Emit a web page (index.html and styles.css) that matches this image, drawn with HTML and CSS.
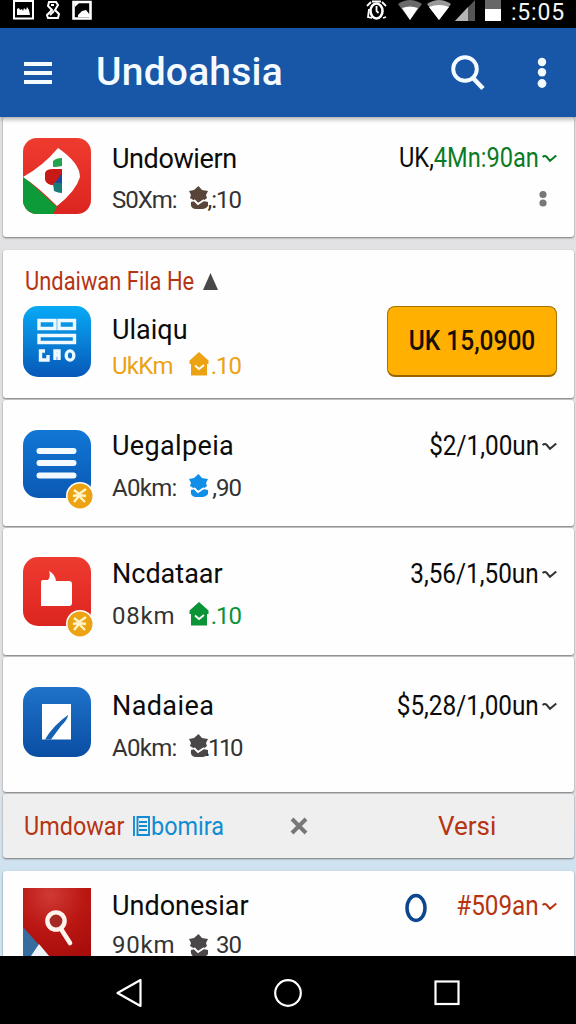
FILE: index.html
```html
<!DOCTYPE html>
<html lang="id">
<head>
<meta charset="utf-8">
<title>Undoahsia</title>
<link rel="stylesheet" href="styles.css">
</head>
<body>
<svg width="0" height="0" class="defs">
  <defs>
    <linearGradient id="sky" x1="0" y1="0" x2="0" y2="1"><stop offset="0" stop-color="#08aaf6"/><stop offset="1" stop-color="#0758b8"/></linearGradient>
    <linearGradient id="blue" x1="0" y1="0" x2="0" y2="1"><stop offset="0" stop-color="#1177d6"/><stop offset="1" stop-color="#0a59b4"/></linearGradient>
    <linearGradient id="navy" x1="0" y1="0" x2="0" y2="1"><stop offset="0" stop-color="#1e72ca"/><stop offset="1" stop-color="#0a4ea3"/></linearGradient>
    <linearGradient id="red" x1="0" y1="0" x2="0" y2="1"><stop offset="0" stop-color="#ee3b2f"/><stop offset="1" stop-color="#dc2520"/></linearGradient>
    <radialGradient id="crimson" cx=".4" cy=".1" r="1"><stop offset="0" stop-color="#cf3a35"/><stop offset=".5" stop-color="#bb1713"/><stop offset="1" stop-color="#a60d0b"/></radialGradient>
    <symbol id="chev" viewBox="0 0 15 9"><path d="M.6 3Q2.800.8 4.800 3L8 6.800 14.300 1.600" fill="none" stroke="currentColor" stroke-width="2"/></symbol>
    <symbol id="house" viewBox="0 0 20 24"><path d="M10 0 .5 8.500V12H2v11.500h16V12h1.500V8.500z" fill="currentColor"/><path d="M6 13.500l4 3.500 5-4" fill="none" stroke="#fff" stroke-width="1.800"/></symbol>
    <symbol id="bloom" viewBox="0 0 20 24"><path d="M9.500 0L13 4l6 1-2 4 1 3-4 3 5 1v4q-2 3-5 3H6q-5-1-4-7l4-1-5-3 1-3-2-4 5-1z" fill="currentColor"/><path d="M5 14l4 4 6-4" fill="none" stroke="#fff" stroke-width="1.800"/></symbol>
    <symbol id="coin" viewBox="0 0 28 28"><circle cx="14" cy="14" r="14" fill="#fff"/><circle cx="14" cy="14" r="12.500" fill="#eba314"/><path d="M8 8l5 4 7-5M7 14l6-1 7 1M8 20l5-6 6 6" fill="none" stroke="#fff4c9" stroke-width="2.400"/></symbol>
  </defs>
</svg>
<div class="phone">
  <div class="status">
    <div class="status-left">
      <svg width="21" height="20" viewBox="0 0 21 20"><rect x="1" y="1" width="19" height="17.500" fill="none" stroke="#fff" stroke-width="2"/><path d="M4 15V9l2-1 1 2 2-1 1 2 1-3 2 2 1-3 2 3 1 5z" fill="#fff"/></svg>
      <svg width="14" height="20" viewBox="0 0 14 20"><path d="M3 2h7l2 3-3 5 4 4-1 4H2l-1-3 5-5-4-4z" fill="none" stroke="#fff" stroke-width="2"/><path d="M5 5h3M4 15l4-4" stroke="#fff" stroke-width="2"/></svg>
      <svg width="20" height="20" viewBox="0 0 20 20"><path d="M1.500 2h17v16.500h-17z" fill="none" stroke="#fff" stroke-width="2.600"/><path d="M6 15l4-4 4-1 4 5v2H6zM2 3h5L3 7z" fill="#fff"/></svg>
    </div>
    <div class="status-right">
      <svg class="alarm" width="21" height="21" viewBox="0 0 21 21"><ellipse cx="10.500" cy="11" rx="6" ry="7.500" fill="none" stroke="#fff" stroke-width="2.600"/><path d="M1 6l4-4M16 2l4 4M3 9l-1 8 4 1M17 18l3-1M10.500 6v5l2 2M6 1.500h9" fill="none" stroke="#fff" stroke-width="1.800"/></svg>
      <svg class="wifi1" width="24" height="21" viewBox="0 0 24 21"><path d="M0 4q12-8 24 0L12 20z" fill="#6a6a6a"/><path d="M4 8q8-3 16 0l-8 12z" fill="#fff"/></svg>
      <svg class="wifi2" width="24" height="21" viewBox="0 0 24 21"><path d="M0 4q12-8 24 0L12 20z" fill="#999"/><path d="M2 7q10-4 20 0L12 20z" fill="#fff"/></svg>
      <svg class="cell" width="20" height="21" viewBox="0 0 20 21"><path d="M20 0v21H0z" fill="#555"/><path d="M13 7v14H0z" fill="#b5b5b5"/></svg>
      <svg class="battery" width="16" height="21" viewBox="0 0 16 21"><path d="M0 0h16v21H0z" fill="#666"/><path d="M0 9h16v12H0z" fill="#fff"/></svg>
      <span class="clock">:5:05</span>
    </div>
  </div>

  <header class="appbar">
    <svg class="menu" width="28" height="24" viewBox="0 0 28 24"><path d="M0 3h28M0 12h28M0 21h28" stroke="#f4fbff" stroke-width="4"/></svg>
    <h1>Undoahsia</h1>
    <svg class="search" width="34" height="36" viewBox="0 0 34 36"><circle cx="14" cy="14" r="11.800" fill="none" stroke="#f4fbff" stroke-width="3.900"/><path d="M22 23l10 10.500" stroke="#f4fbff" stroke-width="4.600"/></svg>
    <svg class="more" width="10" height="32" viewBox="0 0 10 32"><g fill="#f4fbff"><circle cx="5" cy="5" r="4.200"/><circle cx="5" cy="15.300" r="4.200"/><circle cx="5" cy="26.500" r="4.400"/></g></svg>
  </header>

  <main class="list">
    <section class="card card-first">
      <svg class="icon" width="68" height="76" viewBox="0 0 68 76"><defs><clipPath id="tile"><rect width="68" height="76" rx="14"/></clipPath></defs><g clip-path="url(#tile)"><path d="M0 0h68v76H0z" fill="url(#red)"/><path d="M0 38l34 31-4 7H0z" fill="#0c9b38"/><path d="M0 39Q20 28 35 10q22 15 22 29-4 14-23 29Q14 48 0 39z" fill="#fff"/><path d="M30 23q3-3 9-3v8q-4 1-9 1z" fill="#24a34c"/><path d="M22 35q1-4 8-4h9v16H28q-6-2-6-6z" fill="#c81917"/><path d="M39 35v13h-9z" fill="#174aa0"/><path d="M30 45h9v10q-4 0-8-2z" fill="#197b76"/></g></svg>
      <div class="info"><h2 class="w1">Undowiern</h2><p><span class="dist d1">S0Xm:</span><svg class="mark brown"><use href="#bloom"/></svg><span class="num">,:10</span></p></div>
      <div class="side"><div class="price"><span class="amount p1">UK,<b>4Mn:90an</b></span><svg class="chev green"><use href="#chev"/></svg></div>
        <svg class="dots" width="8" height="18" viewBox="0 0 8 18"><g fill="#777"><circle cx="4" cy="4.500" r="3.600"/><circle cx="4" cy="13" r="3.600"/></g></svg></div>
    </section>

    <section class="card card-featured">
      <div class="promo"><span>Undaiwan Fila He</span><svg width="15" height="17" viewBox="0 0 15 17"><path d="M7.500 0L15 17H0z" fill="#484848"/></svg></div>
      <div class="row">
        <svg class="icon" width="68" height="71" viewBox="0 0 68 71"><rect width="68" height="71" rx="15" fill="url(#sky)"/><g fill="none" stroke="#eefaff" stroke-width="3.400"><path d="M16 14.500h16v8H16zM36 14.500h15.500v8H36zM16 29.500h35.500v7H16z"/><path d="M22 45h-4.500v9H25v-5M32 54v-9h4v9M32 49h4"/><ellipse cx="47" cy="49.500" rx="3.800" ry="4.600"/></g></svg>
        <div class="info"><h2 class="w2">Ulaiqu</h2><p class="amber"><span class="dist">UkKm</span><svg class="mark"><use href="#house"/></svg><span class="num">.10</span></p></div>
        <button class="buy"><span>UK 15,0900</span></button>
      </div>
    </section>

    <section class="card card-c">
      <div class="badged"><svg class="icon" width="68" height="68" viewBox="0 0 68 68"><rect width="68" height="68" rx="15" fill="url(#blue)"/><path d="M16.500 21h34M16.500 33h34M16.500 45.500h34" stroke="#f3faff" stroke-width="6" stroke-linecap="round"/></svg><svg class="coin"><use href="#coin"/></svg></div>
      <div class="info"><h2 class="w3">Uegalpeia</h2><p><span class="dist">A0km:</span><svg class="mark azure"><use href="#bloom"/></svg><span class="num">,90</span></p></div>
      <div class="side"><div class="price"><span class="amount">$2/1,00un</span><svg class="chev"><use href="#chev"/></svg></div></div>
    </section>

    <section class="card card-d">
      <div class="badged"><svg class="icon" width="68" height="69" viewBox="0 0 68 69"><rect width="68" height="69" rx="15" fill="url(#red)"/><path d="M18 25q0-2 2-2h5q3-3 1-9 6 3 7 10h13q3 0 3 3v19q0 3-3 3H18z" fill="#fff"/></svg><svg class="coin"><use href="#coin"/></svg></div>
      <div class="info"><h2 class="w4">Ncdataar</h2><p><span class="dist d4">08km</span><svg class="mark leaf"><use href="#house"/></svg><span class="num leaf">.10</span></p></div>
      <div class="side"><div class="price"><span class="amount">3,56/1,50un</span><svg class="chev"><use href="#chev"/></svg></div></div>
    </section>

    <section class="card card-e">
      <svg class="icon" width="68" height="70" viewBox="0 0 68 70"><rect width="68" height="70" rx="15" fill="url(#navy)"/><path d="M19 17h29v35.500H19z" fill="#fff"/><path d="M22 52.500q8-14 23-24.500 0 4-7 11-6 8-10 13.500z" fill="#1761b5"/></svg>
      <div class="info"><h2 class="w5">Nadaiea</h2><p><span class="dist">A0km:</span><svg class="mark slate"><use href="#bloom"/></svg><span class="num n5">.110</span></p></div>
      <div class="side"><div class="price"><span class="amount">$5,28/1,00un</span><svg class="chev"><use href="#chev"/></svg></div></div>
    </section>

    <section class="card bar">
      <span class="bar-a">Umdowar</span>
      <svg class="doc" width="17" height="20" viewBox="0 0 17 20"><path d="M1 0v20M4.500 1H16v18H4.500zM6 6h8M6 10h8M6 14h8" fill="none" stroke="#118bd2" stroke-width="1.900"/></svg>
      <span class="bar-b">bomira</span>
      <svg class="close" width="18" height="18" viewBox="0 0 18 18"><path d="M2 2l14 14M16 2L2 16" stroke="#777" stroke-width="4"/></svg>
      <span class="bar-c">Versi</span>
    </section>

    <section class="card card-g">
      <svg class="icon" width="68" height="68" viewBox="0 0 68 68"><path d="M0 0h68v68H0z" fill="url(#crimson)"/><path d="M0 39l26 29H0z" fill="#376d9e"/><path d="M16 56L8 68h18z" fill="#eef3fa"/><circle cx="33" cy="33" r="8.600" fill="#a52a24" stroke="#fff5ee" stroke-width="4.400"/><path d="M38 41l9 14" stroke="#fff5ee" stroke-width="4.600" stroke-linecap="round"/></svg>
      <div class="info"><h2 class="w6">Undonesiar</h2><p><span class="dist d4">90km</span><svg class="mark slate mark-low"><use href="#bloom"/></svg><span class="num">30</span></p></div>
      <svg class="ring" width="22" height="30" viewBox="0 0 22 30"><ellipse cx="11" cy="15" rx="9" ry="12.500" fill="none" stroke="#0b468f" stroke-width="3.500"/></svg>
      <div class="side"><div class="price rust"><span class="amount">#509an</span><svg class="chev rust"><use href="#chev"/></svg></div></div>
    </section>
  </main>

  <nav class="nav">
    <svg width="28" height="30" viewBox="0 0 28 30"><path d="M25.500 2v26L2.500 15z" fill="none" stroke="#fff" stroke-width="2.200" stroke-linejoin="round"/></svg>
    <svg width="30" height="30" viewBox="0 0 30 30"><circle cx="15" cy="15" r="12.800" fill="none" stroke="#fff" stroke-width="2.200"/></svg>
    <svg width="28" height="28" viewBox="0 0 28 28"><rect x="2.500" y="2.500" width="23" height="22.500" fill="none" stroke="#fff" stroke-width="2.200"/></svg>
  </nav>
</div>
</body>
</html>
```
FILE: styles.css
```css
* { box-sizing: border-box; }
body { margin: 0; font-family: Roboto, "Liberation Sans", sans-serif; color: #0b0b0b; }
h1, h2, p { margin: 0; font-weight: 400; }
svg { display: block; flex: none; }
.defs { height: 0; }
.phone { width: 576px; height: 1024px; display: flex; flex-direction: column; overflow: hidden; }

.status { height: 28px; background: #000; display: flex; justify-content: space-between; align-items: flex-start; flex: none; }
.status-left { display: flex; gap: 12px; padding-left: 13px; }
.status-right { display: flex; align-items: flex-start; padding-right: 7px; }
.wifi1 { margin-left: 11px; }
.wifi2 { margin-left: 5px; }
.cell { margin-left: 4px; }
.battery { margin-left: 10px; }
.clock { margin-left: 10px; width: 58px; color: #f4f4f4; font-size: 23px; line-height: 26px; letter-spacing: .8px; white-space: nowrap; }

.appbar { height: 89px; background: #1856a7; display: flex; align-items: center; padding: 0 29px 0 24px; flex: none; position: relative; box-shadow: 0 2px 5px rgba(0, 0, 0, .35); }
.appbar h1 { margin-left: 44px; font-size: 39px; font-weight: 500; letter-spacing: .2px; color: #f4fbff; flex: 1; line-height: 42px; padding-bottom: 2px; }
.search { margin-right: 52px; }

.list { flex: 1; display: flex; flex-direction: column; padding: 0 2px 0 3px; overflow: hidden; background: linear-gradient(#e2e2e4 0, #e2e2e4 650px, #cfe2f0 750px); }
.card { background: #fefefe; border-radius: 3px; box-shadow: 0 1px 2px #777; display: flex; padding: 0 17px 0 20px; flex: none; margin-bottom: 2px; }
.card-first { height: 120px; padding-top: 21px; margin-bottom: 13px; }
.card-featured { height: 148px; flex-direction: column; padding-top: 18px; }
.card-c { height: 126px; padding-top: 26px; }
.card-d { height: 127px; padding-top: 26px; }
.card-e { height: 135px; padding-top: 29px; }
.card-g { height: 100px; padding-top: 15px; }
.row { display: flex; align-items: flex-start; margin-top: 12px; }
.icon { margin-right: 21px; }
.card-c .icon { margin-top: 4px; }
.card-d .icon { margin-top: 3px; }
.card-e .icon { margin-top: 1px; }
.card-g .icon { margin-top: 2px; }
.badged { position: relative; }
.coin { position: absolute; left: 43px; top: 56px; width: 28px; height: 28px; }
.info { flex: 1; }
.info h2 { font-size: 27px; line-height: 41px; white-space: nowrap; }
.info .w1 { letter-spacing: -.4px; padding-top: 1px; line-height: 40px; }
.info .w3 { letter-spacing: .35px; }
.info .w5 { letter-spacing: .4px; }
.info p { font-size: 24px; line-height: 42px; height: 42px; display: flex; align-items: center; color: #333; white-space: nowrap; }
.info .w2 { line-height: 48px; }
.card-featured p { line-height: 24px; height: 24px; }
.card-g p { line-height: 37px; height: 37px; }
.info .amber { color: #eba314; }
.dist { width: 77px; letter-spacing: -.7px; }
.d1 { letter-spacing: -1px; }
.d4 { letter-spacing: .8px; }
.mark { width: 20px; height: 24px; margin-top: -4px; }
.mark-low { margin-top: 0; }
.num { width: 32px; display: flex; justify-content: flex-end; letter-spacing: -1px; }
.n5 { letter-spacing: -2.5px; }
.brown { color: #59443a; }
.azure { color: #118fe8; }
.leaf { color: #0b9437; }
.slate { color: #4b4748; }
.rust { color: #b63412; }
.green { color: #0a7a25; }

.side { display: flex; flex-direction: column; align-items: flex-end; }
.price { display: flex; align-items: center; font-size: 27px; line-height: 41px; white-space: nowrap; }
.amount { display: block; transform: scaleX(.9); transform-origin: right; }
.p1 { transform: scaleX(.875); }
.price b { font-weight: 400; color: #0a7a25; }
.chev { width: 15px; height: 9px; margin-left: 3px; color: #333; }
.chev.green { color: #0a7a25; }
.chev.rust { color: #b63412; }
.dots { margin: 11px 10px 0 0; }
.ring { margin: 7px 19px 0 0; }
.card-g .ring { margin-right: 20px; }

.promo { display: flex; align-items: center; padding-left: 2px; height: 26px; font-size: 25px; color: #b63412; }
.promo span { width: 178px; white-space: nowrap; transform: scaleX(.876); transform-origin: left; }
.buy { width: 170px; height: 71px; border: 1px solid #a67300; border-bottom: 2px solid #966500; border-radius: 8px; background: #ffb000; font: 500 27px/1 Roboto, sans-serif; color: #170e05; padding: 0; white-space: nowrap; }
.buy span { display: block; transform: scaleX(.907); }

.bar { height: 64px; margin-bottom: 13px; background: #efefef; align-items: center; padding-left: 21px; font-size: 26px; }
.bar-a { color: #b63412; width: 101px; transform: scaleX(.9); transform-origin: left; }
.doc { margin: 0 1px 0 8px; }
.bar-b { color: #118bd2; width: 72px; transform: scaleX(.9); transform-origin: left; }
.bar-a, .bar-b { flex: none; white-space: nowrap; }
.bar .bar-a { width: 101px; }
.close { margin: 0 130px 0 67px; }
.bar-c { color: #b63412; }

.nav { height: 68px; background: #000; display: flex; align-items: center; flex: none; gap: 130px; padding: 5px 0 0 115px; z-index: 1; }
```
